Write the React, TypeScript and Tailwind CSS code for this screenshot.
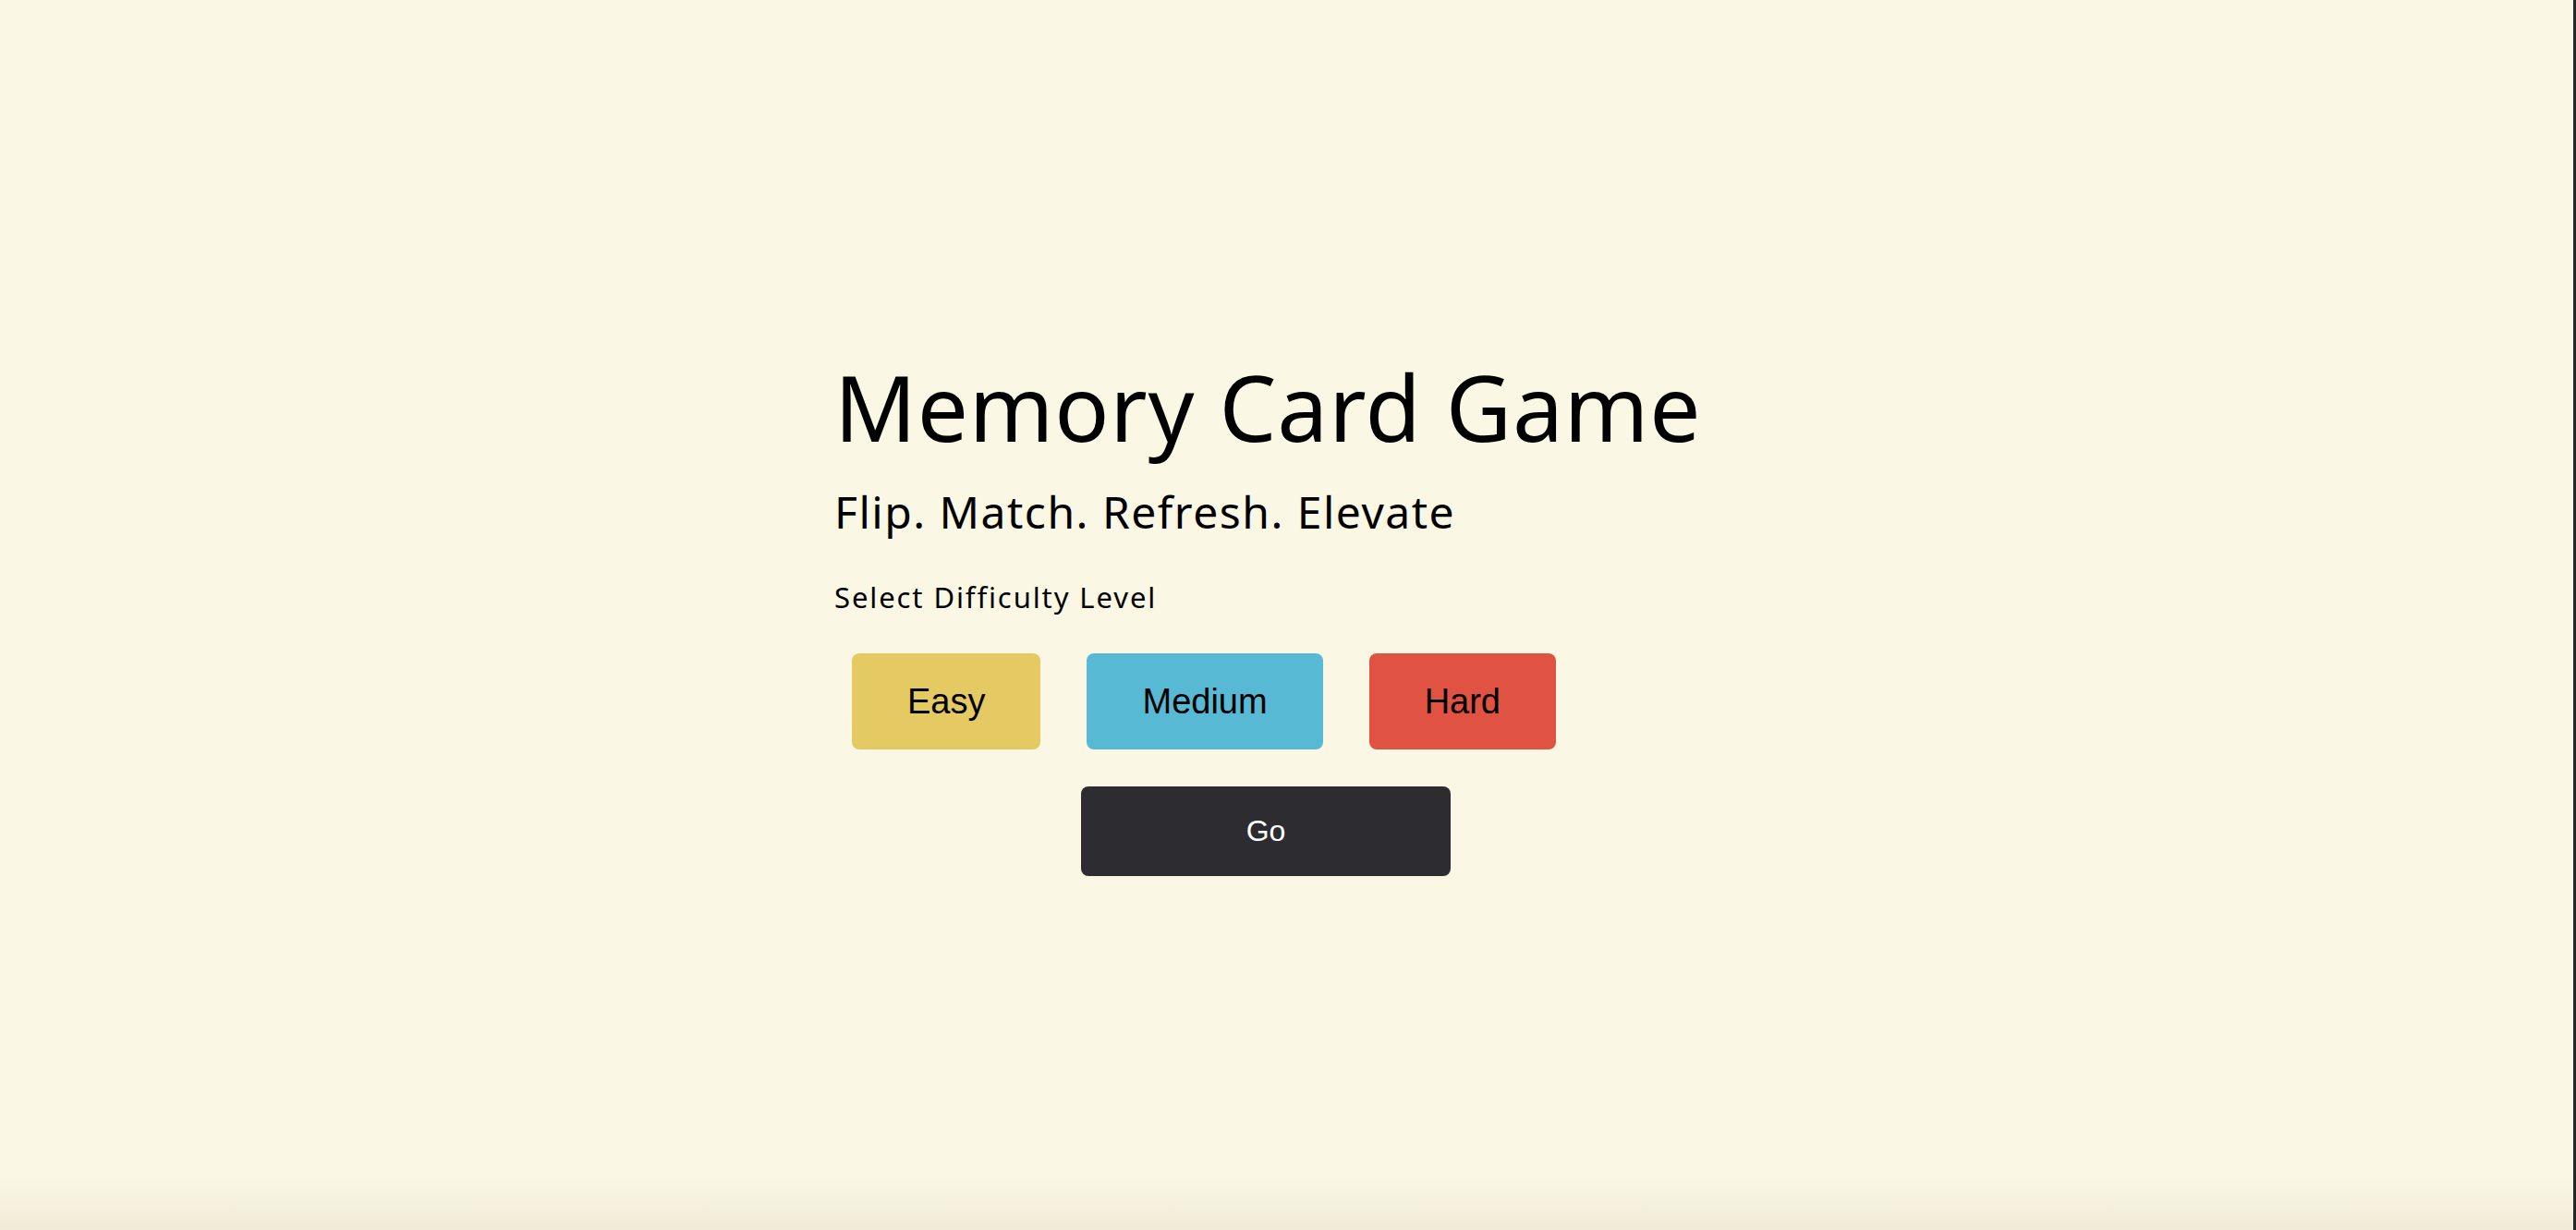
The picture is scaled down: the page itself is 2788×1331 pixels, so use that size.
import React from "react";

export default function App() {
  return (
    <div className="relative min-h-screen w-full overflow-hidden border-r-[3px] border-[#262626] bg-[#faf7e5]">
      <div className="flex h-[1331px] flex-col pl-[903px] pt-[390px]">
        <div className="flex w-[934px] flex-col">
          <h1
            className="m-0 whitespace-nowrap text-[98px] font-normal leading-[100px] tracking-[0.8px] text-black"
            style={{ fontFamily: '"Noto Sans", sans-serif' }}
          >
            Memory Card Game
          </h1>
          <h2
            className="mt-[36px] whitespace-nowrap text-[48px] font-normal leading-[56px] tracking-[1.5px] text-black"
            style={{ fontFamily: '"Noto Sans", sans-serif' }}
          >
            Flip. Match. Refresh. Elevate
          </h2>
          <p
            className="mt-[44px] whitespace-nowrap text-[31px] leading-[40px] tracking-[1.9px] text-black"
            style={{ fontFamily: '"Noto Sans", sans-serif' }}
          >
            Select Difficulty Level
          </p>
          <div
            className="mt-[41px] flex gap-[50px] pl-[19px]"
            style={{ fontFamily: '"Liberation Sans", Arial, sans-serif' }}
          >
            <button className="rounded-[8px] bg-[#e5c962] px-[60px] py-[30px] text-[38px] leading-[44px] text-black">
              Easy
            </button>
            <button className="rounded-[8px] bg-[#57b9d3] px-[60px] py-[30px] text-[38px] leading-[44px] text-black">
              Medium
            </button>
            <button className="rounded-[8px] bg-[#e05241] px-[60px] py-[30px] text-[38px] leading-[44px] text-black">
              Hard
            </button>
          </div>
          <div className="mt-[40px] flex justify-center">
            <button
              className="h-[97px] w-[400px] rounded-[8px] bg-[#2d2c31] text-[32px] leading-[37px] text-white"
              style={{ fontFamily: '"Liberation Sans", Arial, sans-serif' }}
            >
              Go
            </button>
          </div>
        </div>
      </div>
      <div className="pointer-events-none absolute bottom-0 left-0 right-0 h-[60px] bg-gradient-to-b from-transparent to-[#ece8d3]/80" />
    </div>
  );
}
